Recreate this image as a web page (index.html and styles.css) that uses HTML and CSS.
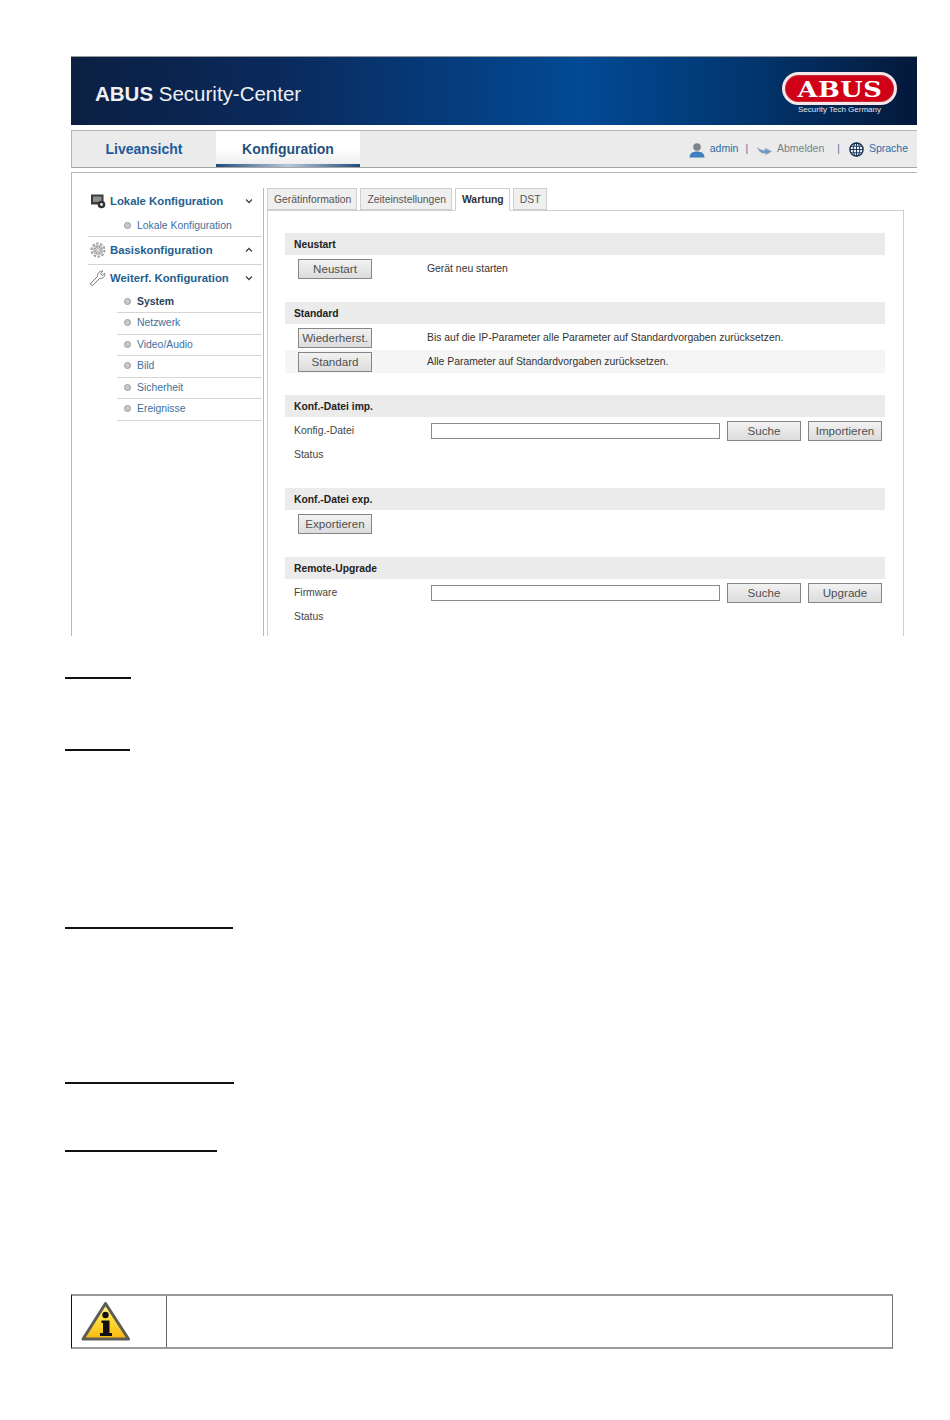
FILE: index.html
```html
<!DOCTYPE html>
<html lang="de">
<head>
<meta charset="utf-8">
<title>ABUS Security-Center</title>
<link rel="stylesheet" href="styles.css">
</head>
<body>
<div class="shot">
  <header class="banner">
    <div class="brand"><b>ABUS</b> Security-Center</div>
    <div class="logo">
      <div class="pill"><span>ABUS</span></div>
      <div class="claim">Security Tech Germany</div>
    </div>
  </header>
  <nav class="topnav">
    <a class="tnav">Liveansicht</a>
    <a class="tnav active">Konfiguration</a>
    <div class="user">
      <svg class="ic person" viewBox="0 0 16 16"><circle cx="8" cy="5" r="3.800" fill="#7f8489"/><path d="M.5 15.500c0-4 3-6 7.500-6s7.500 2 7.500 6z" fill="#3f7fbd"/></svg>
      <span class="ulink">admin</span><span class="sep">|</span>
      <svg class="ic back" viewBox="0 0 16 12"><path d="M.5 2.500C2 5 4 6 9 5.800V3.500l6.500 3.500-6 3.500V8.800C5 9.500 1.500 7.500.5 2.500z" fill="#6f9cc6" stroke="#8a9fb3" stroke-width=".5"/></svg>
      <span class="ulink grey">Abmelden</span><span class="sep wide">|</span>
      <svg class="ic" viewBox="0 0 16 16"><circle cx="8" cy="8" r="7" fill="#eef3f8" stroke="#14304f" stroke-width="1.500"/><ellipse cx="8" cy="8" rx="3.500" ry="7" fill="none" stroke="#14304f"/><path d="M1 8h14M2 4.500h12M2 11.500h12M8 1v14" stroke="#14304f" fill="none"/></svg>
      <span class="ulink">Sprache</span>
    </div>
  </nav>
  <main class="content">
    <aside class="side">
      <div class="group first">
        <svg class="gi" viewBox="0 0 16 16"><rect x="1" y="1.500" width="12.500" height="10" fill="#3c3c3c"/><rect x="3" y="3.500" width="8.500" height="5.500" fill="#8f8f8f"/><circle cx="11.500" cy="11.500" r="3.800" fill="#333"/><circle cx="11.500" cy="11.500" r="1.400" fill="#eee"/></svg>
        <span>Lokale Konfiguration</span>
        <svg class="chev" viewBox="0 0 8 6"><path d="M1 1.500l3 3 3-3" fill="none" stroke="#444" stroke-width="1.300"/></svg>
      </div>
      <div class="sub only"><i></i>Lokale Konfiguration</div>
      <div class="group line">
        <svg class="gi" viewBox="0 0 16 16"><circle cx="8" cy="8" r="5" fill="#a8a8a8"/><circle cx="8" cy="8" r="6.500" fill="none" stroke="#a0a0a0" stroke-width="2" stroke-dasharray="2.500 1.500"/><path d="M3 8h10M8 3v10M4.500 4.500l7 7M11.500 4.500l-7 7" stroke="#e6e6e6" stroke-width=".8"/></svg>
        <span>Basiskonfiguration</span>
        <svg class="chev" viewBox="0 0 8 6"><path d="M1 4.500l3-3 3 3" fill="none" stroke="#444" stroke-width="1.300"/></svg>
      </div>
      <div class="group line">
        <svg class="gi" viewBox="0 0 16 16"><path d="M.8 13.200l6.900-6.900C7 3.500 9.500.5 13 1.200L10.500 3.500l1.500 2 2.700-2.200c.6 3.500-2.300 5.800-5 5l-6.500 6.800c-1 .8-3.200-.6-2.400-1.900z" fill="#fff" stroke="#777"/></svg>
        <span>Weiterf. Konfiguration</span>
        <svg class="chev" viewBox="0 0 8 6"><path d="M1 1.500l3 3 3-3" fill="none" stroke="#444" stroke-width="1.300"/></svg>
      </div>
      <div class="sub cur"><i></i>System</div>
      <div class="sub"><i></i>Netzwerk</div>
      <div class="sub"><i></i>Video/Audio</div>
      <div class="sub"><i></i>Bild</div>
      <div class="sub"><i></i>Sicherheit</div>
      <div class="sub"><i></i>Ereignisse</div>
    </aside>
    <section class="main">
      <div class="tabs">
        <span class="tab">Gerätinformation</span>
        <span class="tab">Zeiteinstellungen</span>
        <span class="tab on">Wartung</span>
        <span class="tab">DST</span>
      </div>
      <div class="panel">
        <h3 class="bar">Neustart</h3>
        <div class="row r1"><button class="btn">Neustart</button><span class="desc">Gerät neu starten</span></div>
        <h3 class="bar s2">Standard</h3>
        <div class="row r2"><button class="btn">Wiederherst.</button><span class="desc">Bis auf die IP-Parameter alle Parameter auf Standardvorgaben zurücksetzen.</span></div>
        <div class="row r2 alt"><button class="btn">Standard</button><span class="desc">Alle Parameter auf Standardvorgaben zurücksetzen.</span></div>
        <h3 class="bar s3">Konf.-Datei imp.</h3>
        <div class="row file"><span class="lab">Konfig.-Datei</span><span class="inp"></span><button class="btn sm">Suche</button><button class="btn sm">Importieren</button></div>
        <div class="lab status">Status</div>
        <h3 class="bar s4">Konf.-Datei exp.</h3>
        <div class="row r1"><button class="btn">Exportieren</button></div>
        <h3 class="bar s2b">Remote-Upgrade</h3>
        <div class="row file"><span class="lab">Firmware</span><span class="inp"></span><button class="btn sm">Suche</button><button class="btn sm">Upgrade</button></div>
        <div class="lab status">Status</div>
      </div>
    </section>
  </main>
</div>
<div class="rules">
  <hr class="rule w66 m1">
  <hr class="rule w65 m2">
  <hr class="rule w168 m3">
  <hr class="rule w169 m4">
  <hr class="rule w152 m5">
</div>
<div class="note">
  <div class="note-icon">
    <svg viewBox="0 0 50 41" class="warn">
      <defs><linearGradient id="wg" x1="0" y1="0" x2="0" y2="1"><stop offset="0" stop-color="#fff6b0"/><stop offset=".45" stop-color="#ffdc3a"/><stop offset="1" stop-color="#f7b90f"/></linearGradient></defs>
      <path d="M24.500 2.500L47.500 38H2z" fill="url(#wg)" stroke="#5f5c54" stroke-width="3" stroke-linejoin="round"/>
      <circle cx="24.500" cy="14" r="3.200" fill="#111"/>
      <path d="M20.500 19.500h8V32h2.500v3H19v-3h3V22h-1.500z" fill="#111"/>
    </svg>
  </div>
  <div class="note-text"></div>
</div>
</body>
</html>
```
FILE: styles.css
```css
* { box-sizing: border-box; }
html, body { margin: 0; padding: 0; background: #fff; }
body { width: 950px; height: 1420px; overflow: hidden; font-family: "Liberation Sans", Arial, sans-serif; color: #333; }

.shot { margin: 56px 33px 0 71px; width: 846px; height: 580px; overflow: hidden; }

.banner {
  height: 69px;
  border-top: 1px solid #9a9a9a;
  background: linear-gradient(90deg, #0b1f42 0%, #0a2a5c 25%, #024a95 60%, #02366f 80%, #04183a 100%);
  display: flex; justify-content: space-between;
  padding: 26px 20px 0 24px;
}
.brand { color: #eef0f4; font-size: 20.500px; line-height: 22px; }
.brand b { font-weight: 700; }
.logo { margin-top: -11px; width: 115px; }
.pill {
  height: 33px; border-radius: 17px; background: #cf0018; border: 3px solid #f6e6e6;
  box-shadow: 0 0 0 1px #c3293a inset;
  display: flex; align-items: center; justify-content: center;
}
.pill span { color: #fff; font: 700 23px/24px "DejaVu Serif", serif; letter-spacing: .5px; transform: scaleX(1.12); }
.claim { color: #e4e8ee; font-size: 8px; line-height: 10px; text-align: center; }

.topnav {
  margin-top: 5px; height: 38px; background: #ebebeb;
  border: 1px solid #b5b5b5; border-width: 1px 0 1px 1px;
  border-bottom-color: #a6a6a6;
  display: flex; align-items: stretch;
}
.tnav { width: 144px; text-align: center; font-size: 14px; font-weight: 700; line-height: 36px; color: #1d5a9c; }
.tnav.active { color: #23527f; background: linear-gradient(#fff 55%, #eee); border-bottom: 3px solid; border-image: linear-gradient(90deg, #1c4a7c, #b9c8d8 50%, #1c4a7c) 1; }
.user { margin-left: auto; display: flex; align-items: center; padding-right: 9px; font-size: 10px; color: #1d5a9c; }
.ic { width: 15px; height: 15px; margin-top: 1px; }
.person { width: 16px; height: 16px; }
.back { height: 11px; width: 15px; margin-top: 3px; }
.ulink { margin-left: 5px; color: #2c6aa5; font-size: 10.500px; margin-top: -2px; }
.ulink.grey { color: #7a7f85; }
.sep { margin: -2px 9px 0 7px; color: #3c6f9f; }
.sep.wide { margin: -2px 9px 0 13px; }

.content {
  margin-top: 4px; height: 470px; border-top: 1px solid #b8b8b8; border-left: 1px solid #b8b8b8;
  display: flex;
}
.side { width: 190px; padding: 15px 0 0 16px; flex: none; }
.group {
  height: 28px; display: flex; align-items: center; font-size: 11.330px; font-weight: 700;
  color: #23608f; border-top: 1px solid transparent; padding-bottom: 3px;
}
.group.line { border-top-color: #d4d4d4; padding-bottom: 2px; }
.gi { width: 16px; height: 16px; margin: 0 4px 0 2px; flex: none; }
.chev { width: 8px; height: 6px; margin-left: auto; margin-right: 9px; }
.sub {
  margin-left: 29px; height: 21.500px; display: flex; align-items: center; font-size: 10.400px; color: #3f6f9c;
  border-bottom: 1px solid #d6d6d6; padding: 0 0 1px 7px;
}
.sub i { width: 7px; height: 7px; border-radius: 50%; background: #c9c9c9; border: 1px solid #9a9a9a; margin-right: 6px; flex: none; }
.sub.only { border-bottom: 0; height: 20px; padding-bottom: 2px; }
.sub.cur { color: #2b3f57; font-weight: 700; height: 21px; padding-bottom: 2px; }

.main { margin-left: 1px; flex: 1; margin-top: 15px; border-left: 1px solid #b8b8b8; padding-left: 3px; min-width: 0; }
.tabs { display: flex; gap: 3px; height: 23px; position: relative; z-index: 1; }
.tab {
  height: 22px; padding: 0 5px 0 6px; border: 1px solid #cfcfcf; background: #efefef; font-size: 10.400px;
  line-height: 21px; color: #555; text-align: center;
}
.tab.on { background: #fff; border-bottom-color: #fff; height: 23px; color: #333; font-weight: 700; }
.panel {
  width: 637px; height: 430px; margin-top: -1px; border: 1px solid #cfcfcf; padding: 22px 18px 0 17px;
}
.bar {
  margin: 0; height: 22px; background: #ebebeb; color: #222; font-size: 10.300px; font-weight: 700;
  line-height: 23px; padding-left: 9px;
}
.s2 { margin-top: 21px; }
.s2b { margin-top: 21px; }
.s3 { margin-top: 22px; }
.s4 { margin-top: 23px; }
.row { display: flex; align-items: center; font-size: 10.400px; }
.r1 { height: 26px; padding: 2px 0 0 13px; }
.r2 { height: 26px; padding: 2px 0 0 13px; }
.r2.alt { background: #f5f5f5; height: 23px; padding-top: 1px; }
.btn {
  width: 74px; height: 20px; padding: 0; border: 1px solid #858585; border-radius: 0;
  background: linear-gradient(#f2f2f2, #dcdcdc); font: 11.600px/18px "Liberation Sans", Arial, sans-serif; color: #505050; flex: none;
}
.desc { margin-left: 55px; color: #333; margin-top: -2px; }
.file { height: 26px; padding: 2px 0 0 9px; }
.lab { font-size: 10.400px; color: #444; }
.file .lab { width: 137px; flex: none; margin-top: -2px; }
.inp { width: 289px; height: 16px; background: #fff; border: 1px solid #8a8a8a; flex: none; }
.file .btn { margin-left: 7px; }
.status { height: 22px; line-height: 24px; padding-left: 9px; }

.rules { height: 0; margin-left: 65px; }
.rule { display: block; border: 0; height: 2px; background: #111; margin: 0; }
.m1 { margin-top: 41px; }
.m2 { margin-top: 70px; }
.m3 { margin-top: 176px; }
.m4 { margin-top: 153px; }
.m5 { margin-top: 66px; }
.w66 { width: 66px; } .w65 { width: 65px; } .w168 { width: 168px; } .w169 { width: 169px; } .w152 { width: 152px; }

.note {
  position: absolute; left: 71px; top: 1294px; width: 822px; height: 55px;
  display: flex; border: 1px solid #111; border-top: 2px solid #9a9a9a; border-right: 1px solid #777; border-bottom: 2px solid #9a9a9a;
}
.note-icon { width: 95px; border-right: 1px solid #666; display: flex; align-items: center; padding-left: 9px; }
.warn { width: 50px; height: 41px; }
.note-text { flex: 1; }
```
